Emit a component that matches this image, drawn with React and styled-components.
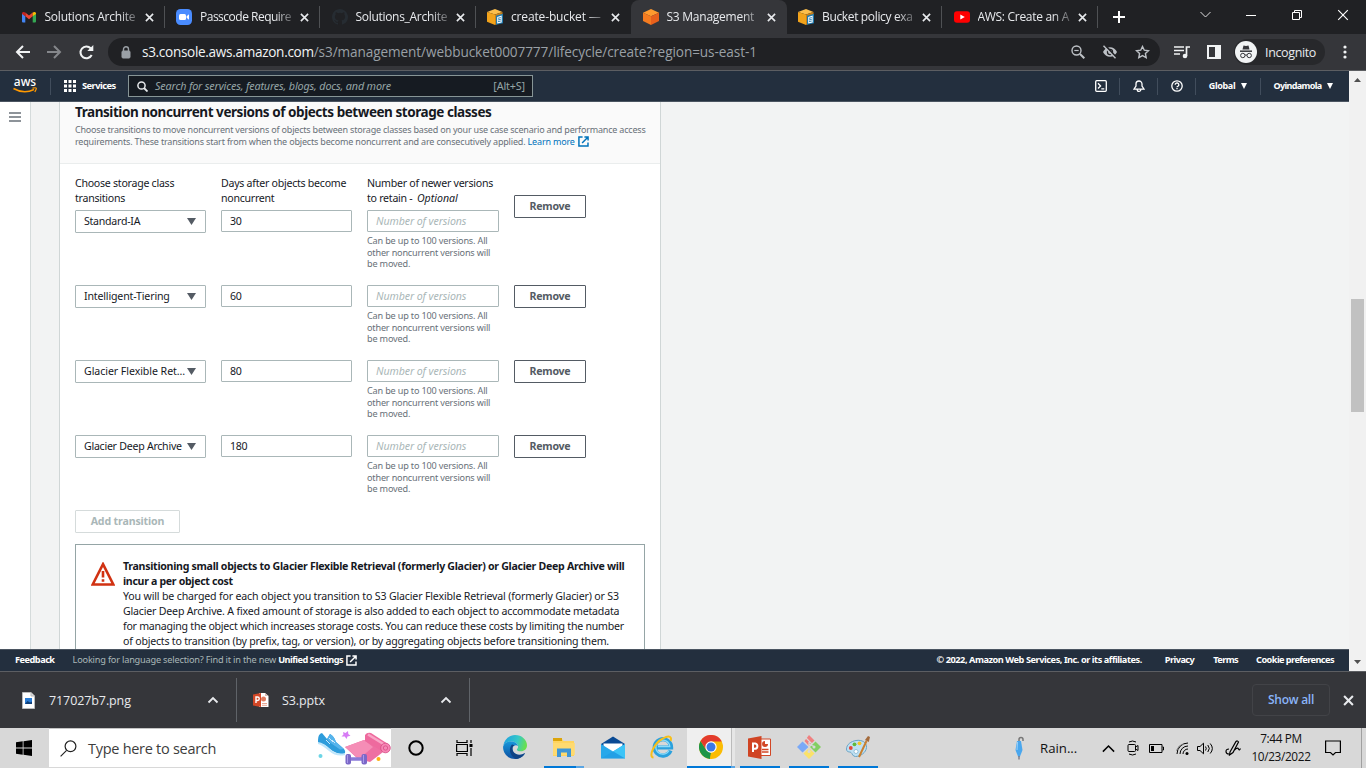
import React from 'react';
import styled, { createGlobalStyle, css } from 'styled-components';

const Global = createGlobalStyle`
  * { box-sizing: border-box; }
  body { margin: 0; overflow: hidden; background: #202124; }
  svg { display: block; flex: none; }
`;

const chromeFont = `"Segoe UI", "Open Sans", "Noto Sans", sans-serif`;
const awsFont = `"Amazon Ember", "Noto Sans", "Open Sans", sans-serif`;

const Screen = styled.div`
  width: 1366px;
  height: 768px;
  display: flex;
  flex-direction: column;
  overflow: hidden;
  font-family: ${chromeFont};
`;

/* ---------- browser tabs ---------- */
const TabStrip = styled.div`
  height: 34px;
  flex: none;
  display: flex;
  padding-left: 9px;
  background: #202124;
`;
const Tab = styled.div`
  width: 155.5px;
  height: 34px;
  display: flex;
  align-items: center;
  padding: 0 10px 0 11.5px;
  color: #e8eaed;
  background: ${(p) => (p.$active ? '#35363a' : 'transparent')};
  border-radius: 8px 8px 0 0;
  border-right: 1px solid transparent;
  ${(p) => p.$divider && css`
    border-radius: 0;
    border-image: linear-gradient(transparent 7px, #4f5154 7px, #4f5154 27px, transparent 27px) 1;
  `}
`;
const Favicon = styled.div`
  width: 16px;
  height: 16px;
  margin-right: 8px;
`;
const TabTitle = styled.div`
  flex: 1;
  margin-right: -3px;
  font-size: 12px;
  letter-spacing: ${(p) => p.$ls || 0}px;
  line-height: 20px;
  white-space: nowrap;
  mask-image: linear-gradient(90deg, #000 80%, rgba(0, 0, 0, 0.25) 100%);
`;
const TabClose = styled.div`
  width: 19px;
  display: flex;
  justify-content: flex-end;
`;
const NewTab = styled.div`
  width: 43px;
  display: flex;
  align-items: center;
  justify-content: center;
`;
const WindowButtons = styled.div`
  margin-left: auto;
  display: flex;
  height: 29px;
`;
const WindowButton = styled.div`
  width: 46px;
  display: flex;
  align-items: center;
  justify-content: center;
`;

/* ---------- browser toolbar ---------- */
const Toolbar = styled.div`
  height: 37px;
  flex: none;
  display: flex;
  align-items: center;
  padding-left: 6px;
  background: #35363a;
  border-bottom: 1px solid #5c5e62;
`;
const NavButton = styled.div`
  width: 32px;
  display: flex;
  justify-content: center;
`;
const AddressBar = styled.div`
  width: 1052px;
  height: 28px;
  margin-left: 6px;
  padding: 0 2px 0 13px;
  border-radius: 14px;
  background: #202124;
  display: flex;
  align-items: center;
`;
const Url = styled.div`
  flex: 1;
  margin-left: 11px;
  font-size: 13.6px;
  letter-spacing: -0.09px;
  line-height: 20px;
  color: #9aa0a6;
  white-space: nowrap;
  b { font-weight: 400; color: #f1f3f4; letter-spacing: -0.32px; }
`;
const AddressIcon = styled.div`
  width: 32px;
  display: flex;
  justify-content: center;
`;
const ToolbarIcon = styled.div`
  width: 32px;
  margin-left: ${(p) => p.$gap || 0}px;
  display: flex;
  justify-content: center;
`;
const IncognitoChip = styled.div`
  width: 91px;
  height: 26px;
  margin-left: 4px;
  border-radius: 13px;
  background: #27282b;
  display: flex;
  align-items: center;
  gap: 8px;
  padding-left: 1px;
  color: #e8eaed;
  font-size: 12.5px;
  letter-spacing: -0.36px;
`;

/* ---------- page viewport ---------- */
const Viewport = styled.div`
  height: 600px;
  flex: none;
  display: flex;
`;
const Page = styled.div`
  width: 1349px;
  display: flex;
  flex-direction: column;
  font-family: ${awsFont};
  color: #16191f;
`;
const Scrollbar = styled.div`
  width: 17px;
  background: #f1f1f1;
  display: flex;
  flex-direction: column;
  align-items: center;
  padding: 7px 0;
`;
const ScrollThumb = styled.div`
  width: 13px;
  height: 113px;
  margin-top: 217px;
  margin-bottom: auto;
  background: #c1c1c1;
`;

const AwsNav = styled.div`
  height: 31px;
  flex: none;
  display: flex;
  align-items: center;
  background: #232f3e;
  border-bottom: 1px solid #4b5561;
  color: #fff;
`;
const AwsLogo = styled.div`
  width: 51px;
  height: 17px;
  border-right: 1px solid #414d5c;
  display: flex;
  flex-direction: column;
  align-items: center;
  justify-content: center;
  font-size: 12px;
  font-weight: 500;
  line-height: 8px;
  letter-spacing: 0;
  svg { margin-top: 1px; }
`;
const Services = styled.div`
  width: 77px;
  padding-left: 13px;
  display: flex;
  align-items: center;
  gap: 6px;
  font-size: 9.3px;
  font-weight: 700;
  letter-spacing: -0.55px;
  span { padding-bottom: 1px; }
`;
const SearchField = styled.div`
  width: 405px;
  height: 22px;
  padding: 0 7px 0 8px;
  display: flex;
  align-items: center;
  gap: 7px;
  border: 1px solid #879596;
  background: #161b22;
  color: #95a5a6;
  font-size: 10.8px;
  letter-spacing: -0.16px;
  line-height: 18px;
  i { flex: 1; padding-bottom: 1px; }
  span { padding-bottom: 1px; }
`;
const NavRight = styled.div`
  margin-left: auto;
  display: flex;
`;
const NavItem = styled.div`
  width: ${(p) => p.$w}px;
  height: 17px;
  display: flex;
  align-items: center;
  justify-content: center;
  gap: 6px;
  padding-bottom: ${(p) => (p.$text ? 1 : 0)}px;
  padding-right: ${(p) => (p.$last ? 3 : 0)}px;
  border-right: ${(p) => (p.$last ? 'none' : '1px solid #414d5c')};
  font-size: 9px;
  font-weight: 700;
  letter-spacing: ${(p) => (p.$last ? -0.65 : -0.35)}px;
`;

const Body = styled.div`
  height: 547px;
  flex: none;
  display: flex;
  overflow: hidden;
  background: #f2f3f3;
`;
const SideRail = styled.div`
  width: 31px;
  background: #fff;
  border-right: 1px solid #d5dbdb;
  padding: 10px 0 0 9px;
`;
const Card = styled.div`
  width: 602px;
  height: 600px;
  margin-left: 28px;
  background: #fff;
  border: 1px solid #d0d6d6;
  border-width: 0 1px;
`;
const CardHeader = styled.div`
  height: 62px;
  padding: 0 15px;
  background: #fafafa;
  border-bottom: 1px solid #eaeded;
`;
const CardTitle = styled.h2`
  margin: 0;
  font-size: 13.5px;
  line-height: 20px;
  font-weight: 700;
  letter-spacing: -0.445px;
  white-space: nowrap;
`;
const CardDescription = styled.p`
  margin: 2px 0 0;
  font-size: 9px;
  line-height: 12px;
  letter-spacing: -0.195px;
  color: #687078;
  white-space: nowrap;
`;
const DescriptionLine = styled.span`
  letter-spacing: -0.175px;
`;
const Link = styled.span`
  color: #0073bb;
  svg { display: inline-block; vertical-align: -2px; margin-left: 1px; }
`;
const CardBody = styled.div`
  padding: 12px 15px;
`;
const Row = styled.div`
  display: flex;
  gap: 15px;
  height: ${(p) => (p.$first ? 109 : 75)}px;
`;
const Field = styled.div`
  width: ${(p) => p.$w || 131}px;
`;
const Label = styled.div`
  height: 34px;
  font-size: 10.6px;
  line-height: 15px;
  letter-spacing: -0.26px;
  color: #16191f;
  white-space: nowrap;
  i { margin-left: 2px; letter-spacing: 0; }
`;
const Control = styled.div`
  height: ${(p) => (p.$select ? 23 : 22)}px;
  display: flex;
  align-items: center;
  justify-content: space-between;
  padding: 0 9px 1px 8px;
  border: 1px solid #aab7b8;
  border-radius: 1px;
  background: #fff;
  font-size: 10.6px;
  letter-spacing: ${(p) => p.$ls || -0.26}px;
  white-space: nowrap;
  color: #16191f;
`;
const Placeholder = styled.i`
  color: #aab7b8;
  letter-spacing: -0.08px;
`;
const Hint = styled.div`
  margin-top: 3px;
  font-size: 9.1px;
  line-height: 11.5px;
  letter-spacing: -0.17px;
  color: #687078;
  white-space: nowrap;
`;
const Button = styled.div`
  width: ${(p) => p.$w}px;
  height: 23px;
  margin-top: ${(p) => p.$top || 0}px;
  padding-bottom: 1px;
  display: flex;
  align-items: center;
  justify-content: center;
  border: 1px solid ${(p) => (p.$disabled ? '#d5dbdb' : '#545b64')};
  border-radius: 1px;
  color: ${(p) => (p.$disabled ? '#aab7b8' : '#545b64')};
  font-size: 10.6px;
  font-weight: 700;
  letter-spacing: ${(p) => (p.$disabled ? -0.14 : -0.25)}px;
`;
const Alert = styled.div`
  margin-top: 11px;
  height: 150px;
  display: flex;
  padding: 14px 15px;
  gap: 8px;
  border: 1px solid #95a5a6;
`;
const AlertIcon = styled.div`
  padding-top: 3px;
`;
const AlertText = styled.div`
  font-size: 10.6px;
  line-height: 15px;
  white-space: nowrap;
  color: #16191f;
`;
const AlertLine = styled.div`
  font-weight: ${(p) => (p.$bold ? 700 : 400)};
  letter-spacing: ${(p) => p.$ls}px;
`;
const AwsFooter = styled.div`
  height: 22px;
  flex: none;
  display: flex;
  align-items: center;
  padding: 0 15px 2px;
  background: #232f3e;
  border-top: 1px solid #4b5561;
  color: #fff;
  font-size: 9.2px;
  letter-spacing: -0.45px;
  white-space: nowrap;
`;
const FooterItem = styled.span`
  display: flex;
  align-items: center;
  font-weight: 700;
  letter-spacing: ${(p) => p.$ls || -0.45}px;
  margin-left: ${(p) => (p.$auto ? 'auto' : `${p.$gap || 0}px`)};
  span { font-weight: 400; color: #aab7b8; white-space: pre; letter-spacing: -0.2px; }
  svg { margin: 2px 0 0 3px; }
`;

/* ---------- download shelf ---------- */
const Shelf = styled.div`
  height: 57px;
  flex: none;
  display: flex;
  align-items: center;
  background: #35363a;
  border-top: 1px solid #5c5e62;
`;
const Download = styled.div`
  width: ${(p) => p.$w}px;
  height: 44px;
  display: flex;
  align-items: center;
  padding: 0 17px 0 ${(p) => p.$pad}px;
  border-right: 1px solid #5f6368;
  color: #e8eaed;
  font-size: 12.5px;
  letter-spacing: -0.1px;
`;
const FileName = styled.span`
  flex: 1;
  margin-left: 13px;
`;
const ShowAll = styled.div`
  width: 78px;
  height: 32px;
  margin-left: auto;
  padding-bottom: 2px;
  display: flex;
  align-items: center;
  justify-content: center;
  border: 1px solid #424347;
  border-radius: 4px;
  color: #8ab4f8;
  font-size: 12px;
  font-weight: 600;
  letter-spacing: -0.25px;
`;
const ShelfClose = styled.div`
  width: 36px;
  display: flex;
  justify-content: center;
`;

/* ---------- Windows taskbar ---------- */
const Taskbar = styled.div`
  height: 40px;
  flex: none;
  display: flex;
  background: #d8d8d8;
  color: #111;
`;
const TaskCell = styled.div`
  width: ${(p) => p.$w || 48}px;
  padding-left: ${(p) => p.$pl || 0}px;
  display: flex;
  align-items: center;
  justify-content: center;
`;
const TaskSearch = styled.div`
  width: 342px;
  height: 39px;
  margin: 0 1px;
  background: #fff;
  border-top: 1px solid #c4c4c4;
  display: flex;
  align-items: center;
  padding-left: 11px;
  gap: 11px;
  color: #3d3d3d;
  font-size: 14.5px;
  letter-spacing: -0.28px;
  span { flex: 1; }
`;
const TaskApp = styled.div`
  width: 49px;
  height: 40px;
  display: flex;
  align-items: center;
  justify-content: center;
  border-bottom: 2px solid transparent;
  ${(p) => p.$line && css`
    background: linear-gradient(90deg, transparent 5px, #0078d7 5px, ${p.$multi ? '#0078d7 37px, #5aa5e3 37px, #5aa5e3 45px' : '#0078d7 45px'}, transparent 45px) 0 100% / 100% 2px no-repeat;
    background-origin: border-box;
    background-clip: border-box;
  `}
  ${(p) => p.$current && css`
    width: 48px;
    margin-left: 1px;
    padding-right: 1px;
    background:
      linear-gradient(90deg, #0078d7 44px, #5aa5e3 44px) 0 100% / 100% 2px no-repeat border-box,
      linear-gradient(90deg, #efefef 44px, #bbb 44px, #bbb 45px, #e6e6e6 45px) border-box;
  `}
`;
const Tray = styled.div`
  margin-left: auto;
  display: flex;
  align-items: center;
  font-size: 12px;
  letter-spacing: -0.25px;
`;
const Weather = styled.div`
  width: 80px;
  display: flex;
  align-items: center;
  gap: 15px;
  font-size: 13.2px;
  letter-spacing: 0;
`;
const Clock = styled.div`
  width: 72px;
  text-align: center;
  line-height: 18px;
  font-size: 11.8px;
  letter-spacing: -0.35px;
  padding-bottom: 2px;
`;
const ShowDesktop = styled.div`
  width: 5px;
  height: 40px;
  border-left: 1px solid #a0a0a0;
`;

/* ---------- drawings ---------- */
const Cross = ({ s = 9, c = '#e8eaed', w = 1.8 }) => (
  <svg width={s} height={s} viewBox="0 0 10 10"><path d="M1 1l8 8M9 1l-8 8" stroke={c} strokeWidth={w} fill="none" /></svg>
);
const Caret = ({ w = 7, h = 6, c = '#fff' }) => (
  <svg width={w} height={h} viewBox="0 0 8 6" preserveAspectRatio="none"><path d="M0 0h8L4 6z" fill={c} /></svg>
);
const External = ({ c, s = 11 }) => (
  <svg width={s} height={s} viewBox="0 0 12 12" fill="none" stroke={c} strokeWidth="1.6"><path d="M5 1.200H1V11h9.900V7M7 1h4v4M11 1L4.500 7.600" /></svg>
);
const ChevronUp = ({ c = '#e8eaed', s = 12, w = 1.8 }) => (
  <svg width={s} height={s} viewBox="0 0 12 12"><path d="M1.500 8.500L6 4l4.500 4.500" stroke={c} strokeWidth={w} fill="none" /></svg>
);

const Gmail = () => (
  <svg width="16" height="16" viewBox="0 0 16 16">
    <path d="M1 4v8.500a1 1 0 001 1h2.300V7z" fill="#4285f4" />
    <path d="M15 4v8.500a1 1 0 01-1 1h-2.300V7z" fill="#34a853" />
    <path d="M4.300 7.300V3.600L8 6.400l3.700-2.800v3.700L8 10.200z" fill="#ea4335" />
    <path d="M1 4.600C1 2.800 2.700 2.400 4.300 3.600v3.700L1 4.900z" fill="#c5221f" />
    <path d="M15 4.600c0-1.800-1.700-2.200-3.300-1v3.700L15 4.900z" fill="#fbbc04" />
  </svg>
);
const Zoom = () => (
  <svg width="16" height="16" viewBox="0 0 16 16">
    <rect width="16" height="16" rx="4.500" fill="#4a8cff" />
    <rect x="3" y="5" width="7" height="6" rx="1.500" fill="#fff" />
    <path d="M10.600 7.300L13 5.300v5.400l-2.400-2z" fill="#fff" />
  </svg>
);
const Github = () => (
  <svg width="16" height="16" viewBox="0 0 16 16">
    <path fill="#262c32" d="M8 0C3.580 0 0 3.580 0 8c0 3.540 2.290 6.530 5.470 7.590.4.070.55-.17.55-.38v-1.490c-2.230.48-2.700-.95-2.700-.95-.36-.92-.89-1.170-.89-1.170-.73-.5.060-.49.060-.49.8.060 1.230.83 1.230.83.71 1.220 1.870.87 2.330.66.070-.52.28-.87.5-1.070-1.780-.2-3.640-.89-3.640-3.950 0-.87.31-1.590.82-2.150-.08-.2-.36-1.020.080-2.120 0 0 .67-.21 2.200.82a7.600 7.600 0 014 0c1.530-1.040 2.200-.82 2.200-.82.44 1.100.16 1.920.080 2.120.51.56.82 1.270.82 2.150 0 3.070-1.870 3.750-3.650 3.950.29.25.54.73.54 1.480v2.200c0 .21.15.46.55.38A8 8 0 008 0z" />
  </svg>
);
const AwsDocs = () => (
  <svg width="17" height="16" viewBox="0 0 17 16">
    <path d="M0 3l8-3 7.500 3L8 5.500z" fill="#fcbf4d" />
    <path d="M0 3l8 2.500V16l-8-3.300z" fill="#f2a31b" />
    <path d="M15.500 3L8 5.500V16l7.500-3.300z" fill="#c9811a" />
    <path d="M9 6.800l7-2v9.400l-7 1.600z" fill="#1e78ad" />
    <path d="M10.200 7.900l4.500-1.300v6.800l-4.500 1.200z" fill="#fff" />
    <path d="M11 9.300l2.800-.7M11 11l2.800-.7M11 12.700l2.800-.7" stroke="#1e78ad" strokeWidth=".9" />
  </svg>
);
const S3Cube = () => (
  <svg width="16" height="16" viewBox="0 0 16 16">
    <path d="M0 3.700L8 0l8 3.700-8 3.500z" fill="#ff9a2e" />
    <path d="M0 3.700l8 3.500V16l-8-4z" fill="#f47b20" />
    <path d="M16 3.700L8 7.200V16l8-4z" fill="#e8601c" />
  </svg>
);
const Youtube = () => (
  <svg width="16" height="16" viewBox="0 0 16 16"><rect y="2.300" width="16" height="11.500" rx="3" fill="#f00" /><path d="M6.300 5.400v5.200L10.800 8z" fill="#fff" /></svg>
);

const tabs = [
  { title: 'Solutions Archite', Icon: Gmail, divider: true, ls: -0.22 },
  { title: 'Passcode Require', Icon: Zoom, divider: true, ls: -0.5 },
  { title: 'Solutions_Archite', Icon: Github, divider: true, ls: -0.3 },
  { title: 'create-bucket —', Icon: AwsDocs, ls: -0.15 },
  { title: 'S3 Management', Icon: S3Cube, active: true, ls: -0.25 },
  { title: 'Bucket policy exa', Icon: AwsDocs, divider: true, ls: -0.35 },
  { title: 'AWS: Create an A', Icon: Youtube, divider: true, ls: -0.3 },
];

const rows = [
  ['Standard-IA', '30'],
  ['Intelligent-Tiering', '60', -0.16],
  ['Glacier Flexible Ret…', '80', -0.06],
  ['Glacier Deep Archive', '180'],
];

function BrowserTabs() {
  return (
    <TabStrip>
      {tabs.map(({ title, Icon, active, divider, ls }) => (
        <Tab key={title} $active={active} $divider={divider}>
          <Favicon><Icon /></Favicon>
          <TabTitle $ls={ls}>{title}</TabTitle>
          <TabClose><Cross /></TabClose>
        </Tab>
      ))}
      <NewTab><svg width="12" height="12" viewBox="0 0 12 12"><path d="M6 0v12M0 6h12" stroke="#fff" strokeWidth="2" /></svg></NewTab>
      <WindowButtons>
        <WindowButton><svg width="11" height="7" viewBox="0 0 11 7"><path d="M.5 1l5 5 5-5" stroke="#ddd" fill="none" /></svg></WindowButton>
        <WindowButton><svg width="10" height="10" viewBox="0 0 10 10"><path d="M0 5.500h10" stroke="#fff" /></svg></WindowButton>
        <WindowButton><svg width="10" height="10" viewBox="0 0 10 10" fill="none" stroke="#fff"><path d="M.5 2.500h7v7h-7zM2.500 2.500v-2h7v7h-2" /></svg></WindowButton>
        <WindowButton><Cross s={12} w={0.95} c="#fff" /></WindowButton>
      </WindowButtons>
    </TabStrip>
  );
}

function BrowserToolbar() {
  return (
    <Toolbar>
      <NavButton><svg width="15" height="14" viewBox="0 0 15 14"><path d="M15 7H2M8 1L2 7l6 6" stroke="#f1f3f4" strokeWidth="2" fill="none" /></svg></NavButton>
      <NavButton><svg width="15" height="14" viewBox="0 0 15 14"><path d="M0 7h13M7 1l6 6-6 6" stroke="#85878b" strokeWidth="2" fill="none" /></svg></NavButton>
      <NavButton><svg width="15" height="15" viewBox="0 0 15 15"><path d="M12.700 10a5.900 5.900 0 11-1-6.700" stroke="#f1f3f4" strokeWidth="2" fill="none" /><path d="M14.300 0v6H8.300z" fill="#f1f3f4" /></svg></NavButton>
      <AddressBar>
        <svg width="10" height="13" viewBox="0 0 10 13"><rect x="1" y="5" width="8" height="7" rx="1" fill="#9aa0a6" stroke="#9aa0a6" /><path d="M2.500 5V3.300a2.500 2.500 0 015 0V5" stroke="#9aa0a6" strokeWidth="1.400" fill="none" /></svg>
        <Url><b>s3.console.aws.amazon.com</b>/s3/management/webbucket0007777/lifecycle/create?region=us-east-1</Url>
        <AddressIcon><svg width="14" height="14" viewBox="0 0 14 14" stroke="#bdc1c6" fill="none"><circle cx="5.500" cy="5.500" r="4.500" strokeWidth="1.400" /><path d="M9 9l4.300 4.300" strokeWidth="2" /><path d="M3.300 5.500h4.400" strokeWidth="1.200" /></svg></AddressIcon>
        <AddressIcon><svg width="16" height="14" viewBox="0 0 16 14"><path d="M1 7c1.500-3 4-4.700 7-4.700S13.500 4 15 7c-1.500 3-4 4.700-7 4.700S2.500 10 1 7z" fill="#bdc1c6" /><circle cx="8" cy="7" r="3.200" fill="#202124" /><circle cx="8" cy="7" r="1.900" fill="#bdc1c6" /><path d="M2.700 0l11.600 12.500" stroke="#202124" strokeWidth="2" /><path d="M1.500.7l12 12.600" stroke="#bdc1c6" strokeWidth="1.400" /></svg></AddressIcon>
        <AddressIcon><svg width="15" height="14" viewBox="0 0 15 14"><path d="M7.500 1.500l1.800 3.700 4.200.5-3.100 2.800.8 4.100-3.700-2-3.700 2 .8-4.100-3.100-2.800 4.200-.5z" stroke="#bdc1c6" strokeWidth="1.400" fill="none" /></svg></AddressIcon>
      </AddressBar>
      <ToolbarIcon $gap={6}><svg width="17" height="14" viewBox="0 0 17 14"><path d="M0 2h10M0 5.500h10M0 9h6M12.500 11V2H16" stroke="#f1f3f4" strokeWidth="1.700" fill="none" /><circle cx="11" cy="11" r="2.300" fill="#f1f3f4" /></svg></ToolbarIcon>
      <ToolbarIcon><svg width="14" height="14" viewBox="0 0 14 14"><path fillRule="evenodd" d="M0 0h14v14H0zM2 2v10h6V2z" fill="#f1f3f4" /></svg></ToolbarIcon>
      <IncognitoChip>
        <svg width="22" height="22" viewBox="0 0 22 22"><circle cx="11" cy="11" r="11" fill="#f1f3f4" /><path d="M7.500 8.500l1-4 2.500.6 2.500-.6 1 4z" fill="#35363a" /><path d="M5 10.200h12" stroke="#35363a" strokeWidth="1.500" /><g fill="none" stroke="#35363a"><circle cx="7.800" cy="14.500" r="2.200" /><circle cx="14.200" cy="14.500" r="2.200" /><path d="M10 14.200q1-.6 2 0" /></g></svg>
        Incognito
      </IncognitoChip>
      <ToolbarIcon $gap={4}><svg width="4" height="14" viewBox="0 0 4 14" fill="#f1f3f4"><circle cx="2" cy="2" r="1.600" /><circle cx="2" cy="7" r="1.600" /><circle cx="2" cy="12" r="1.600" /></svg></ToolbarIcon>
    </Toolbar>
  );
}

function AwsHeader() {
  return (
    <AwsNav>
      <AwsLogo>
        aws
        <svg width="24" height="7" viewBox="0 0 24 7"><path d="M.5 1.500Q11 7.500 21 2.500" stroke="#f90" strokeWidth="1.500" fill="none" /><path d="M19.500 1.200q3.500-.7 3.800 0T21.800 5" stroke="#f90" strokeWidth="1.200" fill="none" /></svg>
      </AwsLogo>
      <Services>
        <svg width="12" height="12" viewBox="0 0 12 12" fill="#fff">{[0, 4.5, 9].map((y) => [0, 4.5, 9].map((x) => <rect key={`${x}-${y}`} x={x} y={y} width="3" height="3" />))}</svg>
        <span>Services</span>
      </Services>
      <SearchField>
        <svg width="11" height="11" viewBox="0 0 11 11" fill="none" stroke="#e6e9ec" strokeWidth="1.500"><circle cx="4.500" cy="4.500" r="3.600" /><path d="M7 7l3.500 3.500" strokeWidth="1.800" /></svg>
        <i>Search for services, features, blogs, docs, and more</i>
        <span>[Alt+S]</span>
      </SearchField>
      <NavRight>
        <NavItem $w={37}><svg width="12" height="12" viewBox="0 0 12 12" fill="none" stroke="#fff" strokeWidth="1.300"><rect x=".7" y=".7" width="10.600" height="10.600" rx="1" /><path d="M3 3.200L5.600 6 3 8.500M6.300 8.800h3" /></svg></NavItem>
        <NavItem $w={38}><svg width="12" height="13" viewBox="0 0 12 13" fill="none" stroke="#fff" strokeWidth="1.300"><path d="M6 1a3 3 0 00-3 3v2L.9 9.200h10.200L9 6V4a3 3 0 00-3-3zM4.200 9.500a1.800 1.900 0 003.600 0" /></svg></NavItem>
        <NavItem $w={38}><svg width="12" height="12" viewBox="0 0 12 12" fill="none" stroke="#fff" strokeWidth="1.300"><circle cx="6" cy="6" r="5.200" /><path d="M4.200 4.700a1.800 1.700 0 113 1.300Q6 6.600 6 7.300M6 8v1.300" /></svg></NavItem>
        <NavItem $w={65} $text>Global<Caret w={6} /></NavItem>
        <NavItem $w={88} $last $text>Oyindamola<Caret w={6} /></NavItem>
      </NavRight>
    </AwsNav>
  );
}

function Transition({ name, days, first, ls }) {
  return (
    <Row $first={first}>
      <Field>
        {first && <Label>Choose storage class<br />transitions</Label>}
        <Control $select $ls={ls}>{name}<Caret w={9} h={7} c="#545b64" /></Control>
      </Field>
      <Field>
        {first && <Label>Days after objects become<br />noncurrent</Label>}
        <Control>{days}</Control>
      </Field>
      <Field $w={132}>
        {first && <Label>Number of newer versions<br />to retain - <i>Optional</i></Label>}
        <Control><Placeholder>Number of versions</Placeholder></Control>
        <Hint>Can be up to 100 versions. All<br />other noncurrent versions will<br />be moved.</Hint>
      </Field>
      <Button $w={72} $top={first ? 19 : 0}>Remove</Button>
    </Row>
  );
}

function LifecycleCard() {
  return (
    <Card>
      <CardHeader>
        <CardTitle>Transition noncurrent versions of objects between storage classes</CardTitle>
        <CardDescription>
          Choose transitions to move noncurrent versions of objects between storage classes based on your use case scenario and performance access<br />
          <DescriptionLine>requirements. These transitions start from when the objects become noncurrent and are consecutively applied. <Link>Learn more <External c="#0073bb" /></Link></DescriptionLine>
        </CardDescription>
      </CardHeader>
      <CardBody>
        {rows.map(([name, days, ls], i) => <Transition key={name} name={name} days={days} ls={ls} first={i === 0} />)}
        <Button $w={105} $disabled>Add transition</Button>
        <Alert>
          <AlertIcon><svg width="24" height="24" viewBox="0 0 24 24"><path d="M12 2.200L22.300 22.500H1.700z" fill="none" stroke="#d13212" strokeWidth="2.600" /><path d="M12 9v6.500M12 17.200v2.600" stroke="#d13212" strokeWidth="2.600" /></svg></AlertIcon>
          <AlertText>
            <AlertLine $bold $ls={-0.29}>Transitioning small objects to Glacier Flexible Retrieval (formerly Glacier) or Glacier Deep Archive will</AlertLine>
            <AlertLine $bold $ls={-0.32}>incur a per object cost</AlertLine>
            <AlertLine $ls={-0.165}>You will be charged for each object you transition to S3 Glacier Flexible Retrieval (formerly Glacier) or S3</AlertLine>
            <AlertLine $ls={-0.19}>Glacier Deep Archive. A fixed amount of storage is also added to each object to accommodate metadata</AlertLine>
            <AlertLine $ls={-0.25}>for managing the object which increases storage costs. You can reduce these costs by limiting the number</AlertLine>
            <AlertLine $ls={-0.21}>of objects to transition (by prefix, tag, or version), or by aggregating objects before transitioning them.</AlertLine>
          </AlertText>
        </Alert>
      </CardBody>
    </Card>
  );
}

function DownloadShelf() {
  return (
    <Shelf>
      <Download $w={237} $pad={22}>
        <svg width="14" height="17" viewBox="0 0 14 17"><path d="M.5.500h8.500l3.500 3.500v12.500H.5z" fill="#fff" stroke="#bbb" /><path d="M9 .500V4h3.500" fill="#ddd" stroke="#bbb" /><path d="M3 6h7v6H3z" fill="#2b7cd3" /><path d="M3 12l2.500-3L8 10.500l2-1V12z" fill="#103f78" /></svg>
        <FileName>717027b7.png</FileName><ChevronUp />
      </Download>
      <Download $w={233} $pad={16}>
        <svg width="16" height="16" viewBox="0 0 16 16"><path d="M6 1h6l3.500 3v11H6z" fill="#fff" /><path d="M12 1v3h3.500z" fill="#d6bcb4" /><circle cx="10.500" cy="7" r="2.500" fill="#e07b5f" /><path d="M9 11.500h5M9 13.300h5" stroke="#e8a592" /><path d="M0 2.500l8-1.500v14l-8-1.500z" fill="#d24726" /><path d="M3 11V5h1.500a1.700 1.700 0 010 3.500H3" stroke="#fff" strokeWidth="1.400" fill="none" /></svg>
        <FileName>S3.pptx</FileName><ChevronUp />
      </Download>
      <ShowAll>Show all</ShowAll>
      <ShelfClose><Cross s={11} w={1.9} /></ShelfClose>
    </Shelf>
  );
}

const FitnessArt = () => (
  <svg width="74" height="34" viewBox="0 0 74 34">
    <path d="M1 9q0-6 4-7l5 6 3-5q4 2 6 8l8 7q2 2 1 5-8 1-15-5Q7 12 1 12z" fill="#2d9cdb" />
    <path d="M5 2l5 6 3-5q4 2 6 8l8 7-4 .500-10-7z" fill="#56b4ec" />
    <path d="M9 9l4 4M12 7l4 4M15 9l3 3" stroke="#cdeafd" />
    <path d="M1 11q6 1 12 7t15 4v2q-9 2-16-4T1 13z" fill="#bfe6fb" />
    <path d="M26 1l2.500 1L31 0l.3 3 2.200 1.800-3 .7L29.500 8l-1.700-2.500-3.300 0 2-2z" fill="#d77cf5" />
    <path d="M28 16l19-7 23 9-17 13-12-3z" fill="#ee6fa2" />
    <path d="M28 16l19-7 9 7-14 12z" fill="#f58db6" />
    <path d="M48 4q2-3 6-2l17 11q3 3 1.500 6t-6 2L48 10z" fill="#ee6a9e" />
    <path d="M51 3.500l17 10.500" stroke="#f9a5c6" strokeWidth="2.500" />
    <circle cx="68.500" cy="17" r="4.800" fill="#f686b4" stroke="#d64d86" strokeWidth=".8" /><circle cx="68.500" cy="17" r="2.200" fill="none" stroke="#d64d86" strokeWidth=".8" />
    <path d="M33 28h14" stroke="#8a7ad8" strokeWidth="3.500" />
    <rect x="28.500" y="23" width="5.500" height="10.500" rx="2" fill="#7b68c8" /><rect x="44.500" y="23" width="5.500" height="10.500" rx="2" fill="#7b68c8" /><path d="M30.500 24v8M46.500 24v8" stroke="#a99ae8" />
    <circle cx="3.500" cy="25" r="2" fill="#6cd5e6" /><circle cx="61.500" cy="28" r="2" fill="#ffb014" />
  </svg>
);
const Edge = () => (
  <svg width="24" height="24" viewBox="0 0 24 24">
    <defs>
      <linearGradient id="edgeTop" x1="0" x2="1" y1=".2" y2=".4"><stop offset="0" stopColor="#1e9fdf" /><stop offset=".6" stopColor="#35c8c9" /><stop offset="1" stopColor="#69e04c" /></linearGradient>
      <linearGradient id="edgeLow" x1="0" x2="0" y1="0" y2="1"><stop offset="0" stopColor="#1797db" /><stop offset="1" stopColor="#0d4fa0" /></linearGradient>
    </defs>
    <path d="M.3 10.500C1.300 4.500 6 0 12 0c7 0 12 5 12 10.300 0 3.700-2.700 6-6 6-3 0-4.500-1-4-2 1-1 1.200-2 1-3.300C14.500 8 11.500 6.500 8.500 6.500 4.500 6.500 1.500 8.500.3 10.500z" fill="url(#edgeTop)" />
    <path d="M.1 11.500C1 8.500 4 6.500 8.500 6.500c4 0 6 2.500 6.500 4.500-1.500-1.500-5-.8-5.500 2-.6 4 4 7.500 8 6.800 2-.3 3.500-1.300 4.500-1.800C20 22 16 24 12 24 5 24-.3 18 .1 11.500z" fill="url(#edgeLow)" />
    <path d="M9 9.500c-3 3-3.500 10 3.500 14.300 4.500.1 8-2.500 9.500-5.800-6 4-13 1-12.500-5 .1-1.200 1-2.300 2-2.700z" fill="#104384" />
  </svg>
);
const FileExplorer = () => (
  <svg width="22" height="19" viewBox="0 0 22 19"><path d="M0 1h9l1.500 2H21v15H0z" fill="#ffd45e" /><path d="M0 0h9v3H0z" fill="#dca40a" /><path d="M0 5h22v12H0z" fill="#ffdb73" opacity=".8" /><path d="M4 10.500h14V19h-4v-4.500H8V19H4z" fill="#3f96d6" /></svg>
);
const Mail = () => (
  <svg width="24" height="23" viewBox="0 0 24 23"><path d="M0 8L12 .500 24 8v2H0z" fill="#0a4a94" /><path d="M2.500 7.500h19v8h-19z" fill="#fff" /><path d="M0 8l12 7.500L24 8v14.500H0z" fill="#28a8ea" /><path d="M24 8v14.500L9 13.500l3 2z" fill="#3cc4f7" /><path d="M24 22.500H0L12 15.500z" fill="#1b93e0" opacity=".35" /></svg>
);
const InternetExplorer = () => (
  <svg width="24" height="24" viewBox="0 0 24 24"><path d="M20.500 15.500a8.200 8.200 0 11.600-3H7" fill="none" stroke="#2ba1dd" strokeWidth="4.200" /><path d="M19 15.500a7 7 0 11.800-4H8" fill="none" stroke="#8ddcf9" strokeWidth="1.300" /><path d="M3.500 22.500C-2 22 4 8 13 3.500c7-4 9-1 7.500 2.500" fill="none" stroke="#f7bf1b" strokeWidth="2" /></svg>
);
const Chrome = () => (
  <svg width="24" height="24" viewBox="0 0 24 24">
    <circle cx="12" cy="12" r="12" fill="#fbbc04" />
    <path d="M1.600 6l5.600 9L12 18l-1 6A12 12 0 011.600 6z" fill="#1e9548" />
    <path d="M12 24l5-9-5 3-1 6z" fill="#fbbc04" />
    <path d="M1.600 6A12 12 0 0122.700 6.500H12L7 9.500v5z" fill="#e33b2e" />
    <circle cx="12" cy="12" r="5.700" fill="#fff" /><circle cx="12" cy="12" r="4.500" fill="#3b78e7" />
  </svg>
);
const PowerPoint = () => (
  <svg width="23" height="23" viewBox="0 0 23 23"><path d="M12 3h10.500v16.500H12z" fill="#fff" stroke="#d24726" /><circle cx="17" cy="8" r="3" fill="#d24726" /><path d="M17 8V4.500A3.500 3.500 0 0120.500 8z" fill="#fff" /><path d="M14 13.500h6.500M14 16h6.500" stroke="#d24726" strokeWidth="1.300" /><path d="M0 2.500L13.500 0v23L0 20.500z" fill="#d04423" /><path d="M5 16V7.500h2.200a2.700 2.700 0 010 5.300H5" stroke="#fff" strokeWidth="2" fill="none" /></svg>
);
const Git = () => (
  <svg width="24" height="24" viewBox="0 0 24 24"><path d="M12 0l5.500 5.500L12 11 7.500 6z" fill="#f08080" /><path d="M18.500 6.500L24 12l-5.500 5.500L13 12z" fill="#83cf63" /><path d="M5.500 6.500L11.500 12l-6 5.500L0 12z" fill="#7aa9f7" /><path d="M12 13l5.500 5.500L12 24l-5.500-5.500z" fill="#fbe269" /><path d="M9 3l6 6M12 7v10M12 9l6 3" stroke="#d8d8d8" strokeWidth="1.200" /><circle cx="12" cy="16.500" r="1.500" fill="#d8d8d8" /><circle cx="17" cy="12" r="1.500" fill="#d8d8d8" /></svg>
);
const Paint = () => (
  <svg width="24" height="23" viewBox="0 0 24 23"><path d="M10 4.500c6-1 11 2 10.500 7-.4 5-6 9-11 9-3 0-3-3-4.500-4S.5 16.500.5 13C.5 8.500 5 5.300 10 4.500z" fill="#bfe0f2" stroke="#6aa3c4" /><circle cx="4.800" cy="12" r="1.900" fill="#e5463a" /><circle cx="8.500" cy="8.300" r="1.900" fill="#61b93c" /><circle cx="13.500" cy="7.300" r="1.900" fill="#f7c325" /><circle cx="10" cy="15.500" r="2" fill="#fff" stroke="#6aa3c4" strokeWidth=".6" /><path d="M20.500 5L13 21" stroke="#c98030" strokeWidth="2" /><path d="M19 4l3-4 2 1-1.200 5z" fill="#a46b3c" /></svg>
);

function WindowsTaskbar() {
  return (
    <Taskbar>
      <TaskCell><svg width="16" height="16" viewBox="0 0 16 16" fill="#000"><path d="M0 2.300L6.700 1.300v6.300H0zM7.500 1.200L16 0v7.600H7.500zM0 8.400h6.700v6.300L0 13.700zM7.500 8.400H16V16l-8.500-1.200z" /></svg></TaskCell>
      <TaskSearch>
        <svg width="17" height="17" viewBox="0 0 17 17" fill="none" stroke="#222" strokeWidth="1.200"><circle cx="10.500" cy="6.300" r="5.400" /><path d="M6.600 10.300L.6 16.300" /></svg>
        <span>Type here to search</span>
        <FitnessArt />
      </TaskSearch>
      <TaskCell><svg width="16" height="16" viewBox="0 0 16 16"><circle cx="8" cy="8" r="6.700" fill="none" stroke="#000" strokeWidth="2" /></svg></TaskCell>
      <TaskCell><svg width="17" height="16" viewBox="0 0 17 16" fill="none" stroke="#000" strokeWidth="1.200"><path d="M1 0v2.500h10V0M1 16v-2.500h10V16M.6 4.500h10.800v7H.6zM15 0v3M15 8v8" /><path d="M13.500 4h3v3h-3z" fill="#000" stroke="none" /></svg></TaskCell>
      <TaskCell $w={2} />
      <TaskApp><Edge /></TaskApp>
      <TaskApp $line $multi><FileExplorer /></TaskApp>
      <TaskApp><Mail /></TaskApp>
      <TaskApp><InternetExplorer /></TaskApp>
      <TaskApp $current><Chrome /></TaskApp>
      <TaskApp $line><PowerPoint /></TaskApp>
      <TaskApp $line><Git /></TaskApp>
      <TaskApp $line><Paint /></TaskApp>
      <Tray>
        <Weather>
          <svg width="11" height="24" viewBox="0 0 11 24"><path d="M5 6V3.500a2 2 0 014 0V5" stroke="#777" strokeWidth="1.500" fill="none" /><path d="M3 5h4l1.500 9L6 20.500h-2L1.500 14z" fill="#4aa7ee" /><path d="M5 20v3.500" stroke="#556" /><path d="M3.500 6L3 14" stroke="#9bd2fb" /></svg>
          Rain...
        </Weather>
        <TaskCell $w={28}><ChevronUp s={15} w={1.2} c="#000" /></TaskCell>
        <TaskCell $w={21}><svg width="12" height="16" viewBox="0 0 12 16" fill="none" stroke="#000"><rect x="1" y="4.500" width="7.500" height="7" rx="1" /><path d="M8.500 7L11 5.500v5L8.500 9M2 2q3.500-2 7 0M2 14q3.500 2 7 0" /></svg></TaskCell>
        <TaskCell $w={27}><svg width="15" height="9" viewBox="0 0 15 9"><path d="M.5.500h12.500v8H.5zM13.500 3h1v3h-1" fill="none" stroke="#000" /><path d="M2 2h3v5H2z" /></svg></TaskCell>
        <TaskCell $w={24}><svg width="13" height="13" viewBox="0 0 13 13" fill="none" stroke="#000"><path d="M1 12A11 11 0 0112 1M4 12a8 8 0 018-8M7 12a5 5 0 015-5" /><path d="M.5 8.500A11 11 0 018 1.500" stroke="#777" /><circle cx="11" cy="11.500" r="1.500" fill="#000" stroke="none" /></svg></TaskCell>
        <TaskCell $w={22}><svg width="17" height="13" viewBox="0 0 17 13" fill="none" stroke="#000"><path d="M.5 4.500H3L6.500 1.200v10.600L3 8.500H.5zM8.500 4.500q1.500 2 0 4M10.800 3q3 3.500 0 7M13.200 1.500q4.300 5 0 10" /></svg></TaskCell>
        <TaskCell $w={29} $pl={5}><svg width="16" height="16" viewBox="0 0 16 16" fill="none" stroke="#000" strokeWidth="1.200"><path d="M5 12L11 1.500q1.500-1.300 2.500.5L8 12.500 4.500 15zM4 9q-3 0-3 2.500T4 14M9.500 10q3-3 4-1t2-.5" /></svg></TaskCell>
        <Clock>7:44 PM<br />10/23/2022</Clock>
        <TaskCell $w={32}><svg width="16" height="16" viewBox="0 0 16 16" fill="none" stroke="#000" strokeWidth="1.200"><path d="M.6 1h14.800v11.500H10.500L8 15l-2.500-2.500H.6z" /></svg></TaskCell>
        <TaskCell $w={12} />
        <ShowDesktop />
      </Tray>
    </Taskbar>
  );
}

export default function App() {
  return (
    <Screen>
      <Global />
      <BrowserTabs />
      <BrowserToolbar />
      <Viewport>
        <Page>
          <AwsHeader />
          <Body>
            <SideRail><svg width="12" height="10" viewBox="0 0 12 10"><path d="M0 1h12M0 5h12M0 9h12" stroke="#687078" strokeWidth="1.500" /></svg></SideRail>
            <LifecycleCard />
          </Body>
          <AwsFooter>
            <FooterItem $ls={-0.5}>Feedback</FooterItem>
            <FooterItem $gap={18} $ls={-0.53}><span>Looking for language selection? Find it in the new </span>Unified Settings <External c="#fff" /></FooterItem>
            <FooterItem $auto>© 2022, Amazon Web Services, Inc. or its affiliates.</FooterItem>
            <FooterItem $gap={23} $ls={-0.55}>Privacy</FooterItem>
            <FooterItem $gap={19} $ls={-0.6}>Terms</FooterItem>
            <FooterItem $gap={18} $ls={-0.57}>Cookie preferences</FooterItem>
          </AwsFooter>
        </Page>
        <Scrollbar>
          <svg width="7" height="4" viewBox="0 0 7 4"><path d="M0 4L3.500 0 7 4z" fill="#505050" /></svg>
          <ScrollThumb />
          <svg width="7" height="4" viewBox="0 0 7 4"><path d="M0 0h7L3.500 4z" fill="#505050" /></svg>
        </Scrollbar>
      </Viewport>
      <DownloadShelf />
      <WindowsTaskbar />
    </Screen>
  );
}
